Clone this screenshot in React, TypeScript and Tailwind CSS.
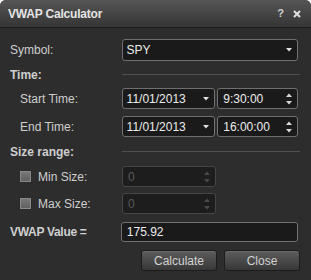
import React from "react";

const font = { fontFamily: '"Liberation Sans", Arial, sans-serif' };

function DownArrow() {
  return (
    <svg width="6" height="4" viewBox="0 0 6 4" className="block">
      <path d="M0 0H6L3 3.5Z" fill="#e0e0e0" />
    </svg>
  );
}

function Spinner({ color = "#d8d8d8" }: { color?: string }) {
  return (
    <svg width="6" height="12" viewBox="0 0 6 12" className="block">
      <path d="M0 4H6L3 0.5Z" fill={color} />
      <path d="M0 8H6L3 11.5Z" fill={color} />
    </svg>
  );
}

function Select({ value, width, height }: { value: string; width: string; height: string }) {
  return (
    <div
      className={`${width} ${height} flex items-center justify-between pl-[4px] pr-[5px] bg-[#1a1a1a] border border-[#707070] rounded-[3px] text-[12px] text-[#ececec]`}
    >
      <span>{value}</span>
      <DownArrow />
    </div>
  );
}

function SpinInput({
  value,
  width,
  disabled,
}: {
  value: string;
  width: string;
  disabled?: boolean;
}) {
  return (
    <div
      className={`${width} h-[21px] flex items-center justify-between pl-[5px] pr-[5px] rounded-[3px] text-[12px] border ${
        disabled
          ? "bg-[#1d1d1d] border-[#464646] text-[#5a5a5a]"
          : "bg-[#1a1a1a] border-[#707070] text-[#ececec]"
      }`}
    >
      <span>{value}</span>
      <Spinner color={disabled ? "#4a4a4a" : "#d8d8d8"} />
    </div>
  );
}

function SectionHeader({ label, height }: { label: string; height: string }) {
  return (
    <div className={`flex items-center ${height}`}>
      <div className="w-[112px] text-[12px] font-bold text-[#cfcfcf]">{label}</div>
      <div className="flex-1 h-px bg-[#4e4e4e] mr-[-2px]" />
    </div>
  );
}

function Checkbox() {
  return (
    <div className="w-[13px] h-[13px] border border-[#2a2a2a] rounded-[1px] bg-gradient-to-b from-[#7a7a7a] to-[#5e5e5e] shadow-[inset_0_0_0_1px_#8a8a8a]" />
  );
}

function Button({ label }: { label: string }) {
  return (
    <div className="w-[76px] h-[21px] flex items-center justify-center rounded-[3px] border border-[#1c1c1c] bg-gradient-to-b from-[#5c5c5c] to-[#383838] shadow-[inset_0_1px_0_#6a6a6a] text-[12px] text-[#d2d2d2]">
      {label}
    </div>
  );
}

export default function App() {
  return (
    <div className="w-[311px] h-[280px] bg-white" style={font}>
      <div className="w-full h-full rounded-t-[6px] overflow-hidden bg-[#2d2d2d] flex flex-col">
        <div className="h-[28px] shrink-0 flex items-center justify-between pl-[8px] pr-[10px] bg-gradient-to-b from-[#565656] to-[#353535] border-b border-[#1e1e1e]">
          <span className="text-[12px] font-bold text-[#e4e4e4] tracking-[-0.2px]">
            VWAP Calculator
          </span>
          <div className="flex items-center gap-[9px]">
            <span className="text-[11px] font-bold text-[#cfcfcf] leading-none">?</span>
            <svg width="8" height="8" viewBox="0 0 8 8" className="block">
              <path d="M1 1L7 7M7 1L1 7" stroke="#e0e0e0" strokeWidth="2" />
            </svg>
          </div>
        </div>
        <div className="flex flex-col pl-[10px] pr-[13px] pt-[11px]">
          <div className="flex items-center">
            <div className="w-[112px] text-[12px] text-[#cfcfcf]">Symbol:</div>
            <Select value="SPY" width="w-[177px]" height="h-[22px]" />
          </div>
          <SectionHeader label="Time:" height="h-[27px]" />
          <div className="flex items-center">
            <div className="w-[112px] pl-[10px] text-[12px] text-[#cfcfcf]">Start Time:</div>
            <Select value="11/01/2013" width="w-[94px]" height="h-[21px]" />
            <div className="w-[2px]" />
            <SpinInput value="9:30:00" width="w-[81px]" />
          </div>
          <div className="flex items-center mt-[7px]">
            <div className="w-[112px] pl-[10px] text-[12px] text-[#cfcfcf]">End Time:</div>
            <Select value="11/01/2013" width="w-[94px]" height="h-[21px]" />
            <div className="w-[2px]" />
            <SpinInput value="16:00:00" width="w-[81px]" />
          </div>
          <SectionHeader label="Size range:" height="h-[29px]" />
          <div className="flex items-center">
            <div className="w-[112px] pl-[9px] flex items-center gap-[6px] text-[12px] text-[#cfcfcf]">
              <Checkbox />
              <span>Min Size:</span>
            </div>
            <SpinInput value="0" width="w-[94px]" disabled />
          </div>
          <div className="flex items-center mt-[6px]">
            <div className="w-[112px] pl-[9px] flex items-center gap-[6px] text-[12px] text-[#cfcfcf]">
              <Checkbox />
              <span>Max Size:</span>
            </div>
            <SpinInput value="0" width="w-[94px]" disabled />
          </div>
          <div className="flex items-center mt-[8px]">
            <div className="w-[112px] text-[12px] font-bold text-[#cfcfcf] tracking-[-0.3px]">
              VWAP Value =
            </div>
            <div className="w-[179px] h-[20px] flex items-center pl-[5px] bg-[#1a1a1a] border border-[#707070] rounded-[3px] text-[12px] text-[#ececec]">
              175.92
            </div>
          </div>
          <div className="flex justify-end gap-[7px] mt-[8px] mr-[-2px]">
            <Button label="Calculate" />
            <Button label="Close" />
          </div>
        </div>
      </div>
    </div>
  );
}
